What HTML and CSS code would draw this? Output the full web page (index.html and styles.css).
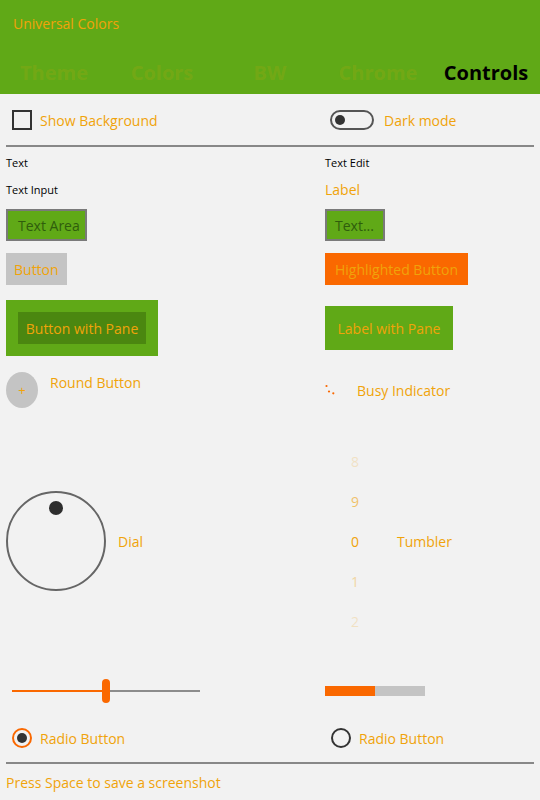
FILE: index.html
```html
<!DOCTYPE html>
<html>
<head>
<meta charset="utf-8">
<title>Universal Colors</title>
<link rel="stylesheet" href="styles.css">
</head>
<body>
<header class="header">
  <div class="title">Universal Colors</div>
  <nav class="tabs">
    <span class="tab">Theme</span>
    <span class="tab">Colors</span>
    <span class="tab">BW</span>
    <span class="tab">Chrome</span>
    <span class="tab active">Controls</span>
  </nav>
</header>
<main class="content">
  <div class="toprow">
    <div class="check"><span class="box"></span><span>Show Background</span></div>
    <div class="switch"><span class="track"><span class="knob"></span></span><span>Dark mode</span></div>
  </div>
  <div class="sep"></div>
  <div class="grid">
    <div class="cell small">Text</div>
    <div class="cell small">Text Edit</div>

    <div class="cell small">Text Input</div>
    <div class="cell">Label</div>

    <div class="cell"><span class="field area">Text Area</span></div>
    <div class="cell"><span class="field edit">Text...</span></div>

    <div class="cell"><span class="btn">Button</span></div>
    <div class="cell"><span class="btn hl">Highlighted Button</span></div>

    <div class="cell"><div class="pane"><span class="pane-btn">Button with Pane</span></div></div>
    <div class="cell"><div class="label-pane">Label with Pane</div></div>

    <div class="cell"><span class="round">+</span><span class="after-round">Round Button</span></div>
    <div class="cell">
      <svg class="busy" width="12" height="12" viewBox="0 0 12 12">
        <circle cx="1.5" cy="2" r="1.1" fill="#fa6800"/>
        <circle cx="4" cy="7.5" r="1.1" fill="#fa6800"/>
        <circle cx="8.3" cy="9.3" r="1.1" fill="#fa6800"/>
      </svg>
      <span class="after-busy">Busy Indicator</span>
    </div>

    <div class="cell"><div class="dial"><span class="dial-handle"></span></div><span class="after-dial">Dial</span></div>
    <div class="cell">
      <div class="tumbler">
        <span class="t8">8</span>
        <span class="t9">9</span>
        <span class="t0">0</span>
        <span class="t1">1</span>
        <span class="t2">2</span>
      </div>
      <span class="after-tumbler">Tumbler</span>
    </div>

    <div class="cell"><div class="slider"><span class="slider-fill"></span><span class="slider-handle"></span></div></div>
    <div class="cell"><div class="progress"><span class="progress-fill"></span></div></div>

    <div class="cell radio-cell"><span class="radio on"></span><span>Radio Button</span></div>
    <div class="cell radio-cell"><span class="radio off"></span><span>Radio Button</span></div>
  </div>
  <div class="sep"></div>
  <div class="footer">Press Space to save a screenshot</div>
</main>
</body>
</html>
```

FILE: styles.css
```css
* {
  box-sizing: border-box;
  margin: 0;
  padding: 0;
}

html, body {
  width: 540px;
  height: 800px;
  background: #f2f2f2;
  overflow: hidden;
}

body {
  font-family: "Open Sans", "Noto Sans", sans-serif;
  font-size: 14px;
  color: #f0a30a;
}

.header {
  height: 94px;
  background: #60a917;
  display: flex;
  flex-direction: column;
}

.title {
  height: 46px;
  padding: 0 13px;
  display: flex;
  align-items: center;
}

.tabs {
  display: flex;
  height: 48px;
  padding-top: 4px;
}

.tab {
  flex: 1;
  display: flex;
  align-items: center;
  justify-content: center;
  font-weight: 700;
  font-size: 20px;
  color: rgba(240, 163, 10, 0.15);
}

.tab.active {
  color: #000;
}

.content {
  padding: 0 6px;
}

.toprow {
  height: 51px;
  display: grid;
  grid-template-columns: 319px 1fr;
  align-items: center;
  padding-top: 1px;
}

.check {
  display: flex;
  align-items: center;
  gap: 8px;
  padding-left: 6px;
}

.box {
  width: 20px;
  height: 20px;
  border: 2px solid #333;
}

.switch {
  display: flex;
  align-items: center;
  gap: 10px;
  padding-left: 5px;
}

.track {
  width: 44px;
  height: 20px;
  border: 2px solid #555;
  border-radius: 10px;
  display: flex;
  align-items: center;
  padding-left: 3px;
}

.knob {
  width: 10px;
  height: 10px;
  border-radius: 50%;
  background: #333;
}

.sep {
  height: 2px;
  background: #888;
}

.grid {
  display: grid;
  grid-template-columns: 319px 1fr;
  grid-template-rows: 30px 24px 48px 40px 78px 46px 256px 43px 50px;
}

.cell {
  display: flex;
  align-items: center;
}

.small {
  font-size: 11px;
  color: #000;
}

.field {
  height: 32px;
  border: 2px solid #7a7a7a;
  background: #60a917;
  color: #2f5d0c;
  display: flex;
  align-items: center;
  padding-left: 10px;
}

.area {
  width: 81px;
}

.edit {
  width: 60px;
  padding-left: 8px;
}

.btn {
  height: 32px;
  padding: 0 8px;
  background: #c4c4c4;
  display: flex;
  align-items: center;
}

.btn.hl {
  background: #fa6800;
  padding: 0 10px;
}

.pane {
  width: 152px;
  height: 56px;
  background: #60a917;
  padding: 12px;
}

.pane-btn {
  height: 32px;
  background: #4b8710;
  display: flex;
  align-items: center;
  justify-content: center;
}

.label-pane {
  width: 128px;
  height: 44px;
  background: #60a917;
  display: flex;
  align-items: center;
  justify-content: center;
}

.round {
  width: 32px;
  height: 36px;
  border-radius: 50%;
  background: #c4c4c4;
  display: flex;
  align-items: center;
  justify-content: center;
  font-size: 13px;
}

.after-round {
  margin-left: 12px;
  align-self: flex-start;
  margin-top: 6px;
}

.busy {
  display: block;
}

.after-busy {
  margin-left: 20px;
}

.dial {
  width: 100px;
  height: 100px;
  border: 2px solid #666;
  border-radius: 50%;
  display: flex;
  justify-content: center;
  padding-top: 8px;
}

.dial-handle {
  width: 14px;
  height: 14px;
  border-radius: 50%;
  background: #2e2e2e;
}

.after-dial {
  margin-left: 12px;
}

.tumbler {
  width: 60px;
  display: flex;
  flex-direction: column;
}

.tumbler span {
  height: 40px;
  display: flex;
  align-items: center;
  justify-content: center;
}

.t8, .t2 {
  opacity: 0.2;
}

.t9 {
  opacity: 0.6;
}

.t1 {
  opacity: 0.35;
}

.after-tumbler {
  margin-left: 12px;
}

.slider {
  position: relative;
  margin-left: 6px;
  width: 188px;
  height: 2px;
  background: #8c8c8c;
}

.slider-fill {
  position: absolute;
  left: 0;
  top: 0;
  width: 92px;
  height: 2px;
  background: #fa6800;
}

.slider-handle {
  position: absolute;
  left: 90px;
  top: -11px;
  width: 8px;
  height: 24px;
  border-radius: 4px;
  background: #fa6800;
}

.progress {
  width: 100px;
  height: 10px;
  background: #c4c4c4;
}

.progress-fill {
  display: block;
  width: 50px;
  height: 10px;
  background: #fa6800;
}

.radio-cell {
  padding-top: 2px;
  padding-left: 6px;
  gap: 8px;
}

.radio {
  width: 20px;
  height: 20px;
  border-radius: 50%;
  border: 2px solid #333;
  display: flex;
  align-items: center;
  justify-content: center;
}

.radio.on {
  border-color: #fa6800;
}

.radio.on::after {
  content: "";
  width: 10px;
  height: 10px;
  border-radius: 50%;
  background: #333;
}

.footer {
  height: 36px;
  display: flex;
  align-items: center;
}
```
